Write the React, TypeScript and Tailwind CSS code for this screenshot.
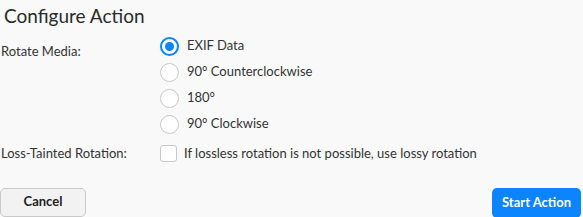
const options = ["EXIF Data", "90° Counterclockwise", "180°", "90° Clockwise"];

const App = () => {
  return (
    <div className="h-[217px] w-[583px] overflow-hidden bg-[#f9f9f9] text-[#333] font-['Lato',sans-serif]">
      <h1 className="pl-[4px] pt-[3px] text-[19px] leading-[25px] font-normal text-[#2a2a2a]">Configure Action</h1>

      <div className="mt-[5px] flex">
        <div className="w-[160px] pl-[1px] pt-[9px] text-[13px] leading-[18px]">Rotate Media:</div>
        <div className="flex flex-col">
          {options.map((opt, i) => (
            <label key={opt} className="flex h-[26px] items-center gap-[8px] text-[13px]">
              {i === 0 ? (
                <span className="flex h-[19px] w-[19px] items-center justify-center rounded-full border-2 border-[#0a84ff] bg-white">
                  <span className="h-[9px] w-[9px] rounded-full bg-[#0a84ff]" />
                </span>
              ) : (
                <span className="h-[19px] w-[19px] rounded-full border border-[#c8c8c8] bg-white" />
              )}
              <span>{opt}</span>
            </label>
          ))}
        </div>
      </div>

      <div className="mt-[7px] flex items-center">
        <div className="w-[160px] pl-[1px] text-[13px]">Loss-Tainted Rotation:</div>
        <label className="flex items-center gap-[7px] text-[13px]">
          <span className="h-[17px] w-[17px] rounded-[3px] border border-[#c8c8c8] bg-white" />
          <span>If lossless rotation is not possible, use lossy rotation</span>
        </label>
      </div>

      <div className="mt-[24px] flex justify-between pr-[2px]">
        <button className="h-[29px] w-[86px] rounded-[5px] border border-[#c9c9c9] bg-[#f2f2f2] text-[13px] font-bold text-[#222]">
          Cancel
        </button>
        <button className="h-[30px] w-[89px] rounded-[5px] bg-[#0a84ff] text-[13px] font-bold text-white">
          Start Action
        </button>
      </div>
    </div>
  );
};

export default App;
